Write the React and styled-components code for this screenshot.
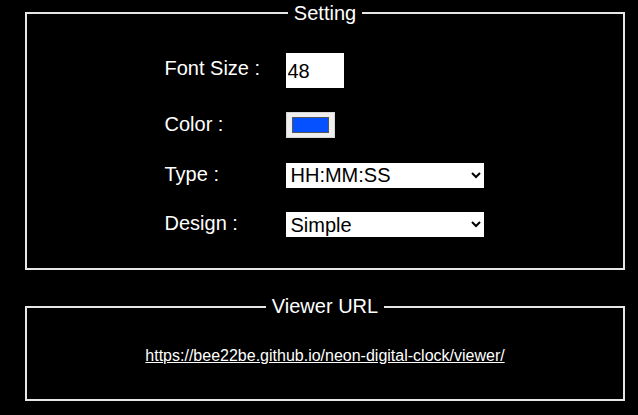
import React from "react";
import styled, { createGlobalStyle } from "styled-components";

const Global = createGlobalStyle`
  html, body {
    margin: 0;
    padding: 0;
    background: #000;
    color: #fff;
    font-family: "Liberation Sans", Arial, sans-serif;
  }
`;

const Page = styled.main`
  width: 600px;
  padding: 1.5px 0 0 25px;
  display: flex;
  flex-direction: column;
  gap: 25.5px;
`;

const Panel = styled.fieldset`
  margin: 0;
  border: 2px solid #e6e6e6;
  padding: ${(p) => p.$pad};
  min-width: 0;
`;

const Legend = styled.legend`
  margin: 0 auto;
  padding: 0 6px;
  font-size: 20px;
  line-height: 23px;
  color: #fff;
`;

const Form = styled.div`
  display: grid;
  grid-template-columns: 121px 198px;
  justify-content: center;
  row-gap: 24.5px;
  align-items: center;
  padding-right: 2px;
`;

const Label = styled.label`
  font-size: 20px;
  line-height: 23px;
  color: #fff;
  margin-top: ${(p) => p.$shift || "-2px"};
`;

const NumberInput = styled.input`
  box-sizing: border-box;
  width: 58px;
  height: 35px;
  margin: 0;
  padding: 2px 2px 0;
  border: none;
  background: #fff;
  color: #000;
  font-family: "Liberation Sans", Arial, sans-serif;
  font-size: 20px;
  outline: none;
`;

const ColorWell = styled.span`
  box-sizing: border-box;
  display: flex;
  width: 49px;
  height: 26px;
  padding: 4px 5px;
  background: #efefef;
  border: 1px solid #d6d6d6;
`;

const Swatch = styled.span`
  flex: 1;
  background: ${(p) => p.$color};
  border: 1px solid #555;
`;

const Select = styled.select`
  box-sizing: border-box;
  width: 198px;
  height: 25px;
  margin: 0;
  padding: 0 0 0 1px;
  border: none;
  border-radius: 0;
  background: #fff;
  color: #000;
  font-family: "Liberation Sans", Arial, sans-serif;
  font-size: 20px;
  outline: none;
`;

const Center = styled.div`
  text-align: center;
  font-size: 16px;
  line-height: 18.5px;
`;

const Link = styled.a`
  color: #fff;
  text-decoration: underline;
`;

export default function App() {
  return (
    <>
      <Global />
      <Page>
        <Panel $pad="28px 0 30.5px">
          <Legend>Setting</Legend>
          <Form>
            <Label $shift="-3px">Font Size :</Label>
            <NumberInput type="text" defaultValue="48" />
            <Label>Color :</Label>
            <ColorWell>
              <Swatch $color="#0550ff" />
            </ColorWell>
            <Label>Type :</Label>
            <Select defaultValue="HH:MM:SS">
              <option>HH:MM:SS</option>
              <option>HH:MM</option>
            </Select>
            <Label>Design :</Label>
            <Select defaultValue="Simple">
              <option>Simple</option>
            </Select>
          </Form>
        </Panel>
        <Panel $pad="29px 0 33px">
          <Legend>Viewer URL</Legend>
          <Center>
            <Link href="https://bee22be.github.io/neon-digital-clock/viewer/">
              https://bee22be.github.io/neon-digital-clock/viewer/
            </Link>
          </Center>
        </Panel>
      </Page>
    </>
  );
}
